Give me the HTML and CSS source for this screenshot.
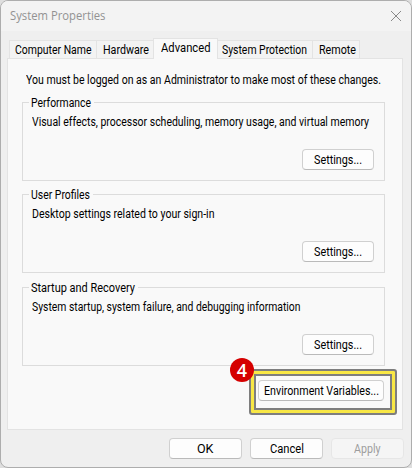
FILE: index.html
```html
<!DOCTYPE html>
<html lang="en">
<head>
<meta charset="utf-8">
<title>System Properties</title>
<link rel="stylesheet" href="styles.css">
</head>
<body>
<main class="window">
  <header class="titlebar">
    <h1 class="title"><span data-width="95.5">System Properties</span></h1>
    <svg class="close" width="12" height="12" viewBox="0 0 12 12"><path d="M1 1L11 11M11 1L1 11"/></svg>
  </header>
  <nav class="tabs">
    <div class="tab tab-computer"><span data-width="76.5">Computer Name</span></div>
    <div class="tab tab-hardware"><span data-width="46">Hardware</span></div>
    <div class="tab tab-advanced active"><span data-width="49.5">Advanced</span></div>
    <div class="tab tab-protection"><span data-width="85">System Protection</span></div>
    <div class="tab tab-remote"><span data-width="37">Remote</span></div>
  </nav>
  <section class="panel">
    <p class="notice"><span data-width="355">You must be logged on as an Administrator to make most of these changes.</span></p>
    <section class="group">
      <h2 class="legend"><span data-width="60">Performance</span></h2>
      <p class="desc"><span data-width="337">Visual effects, processor scheduling, memory usage, and virtual memory</span></p>
      <button class="button settings"><span data-width="48">Settings...</span></button>
    </section>
    <section class="group">
      <h2 class="legend"><span data-width="59">User Profiles</span></h2>
      <p class="desc"><span data-width="182.5">Desktop settings related to your sign-in</span></p>
      <button class="button settings"><span data-width="48">Settings...</span></button>
    </section>
    <section class="group">
      <h2 class="legend"><span data-width="104">Startup and Recovery</span></h2>
      <p class="desc"><span data-width="268.5">System startup, system failure, and debugging information</span></p>
      <button class="button settings"><span data-width="48">Settings...</span></button>
    </section>
    <div class="highlight">
      <button class="button environment"><span data-width="115">Environment Variables...</span></button>
      <span class="badge">4</span>
    </div>
  </section>
  <footer class="actions">
    <button class="button"><span data-width="16.5">OK</span></button>
    <button class="button"><span data-width="34">Cancel</span></button>
    <button class="button" disabled><span data-width="26.5">Apply</span></button>
  </footer>
</main>
<script src="labels.js"></script>
</body>
</html>
```
FILE: labels.js
```js
// Condense each label to its dialog width.
document.querySelectorAll('[data-width]').forEach((label) => {
  const width = Number(label.dataset.width);
  const natural = label.getBoundingClientRect().width;
  label.style.transform = `scaleX(${width / natural})`;
  label.style.marginRight = `${width - natural}px`;
});
```
FILE: styles.css
```css
* { box-sizing: border-box; }
body { margin: 0; background: #dedede; color: #000; font: 12px/14px Roboto, "Liberation Sans", sans-serif; }
h1, h2, p { margin: 0; font: inherit; }
[data-width] { display: inline-block; flex: none; white-space: nowrap; transform-origin: left center; vertical-align: top; }
.window { width: 412px; height: 468px; border: 1px solid #adadad; border-radius: 8px; background: #efefef; overflow: hidden; }
.titlebar { height: 30px; background: #f3f3f3; display: flex; justify-content: space-between; align-items: center; padding: 0 9px 0 9px; }
.title { font: 12px/16px "Open Sans", sans-serif; color: #929292; }
.close { fill: none; stroke: #898989; stroke-width: 1; }
.tabs { height: 27px; margin: 0 0 0 8px; display: flex; align-items: flex-end; }
.tab { height: 18px; border: 1px solid #e3e3e3; border-bottom: 0; margin-right: -1px; background: #f3f3f3; padding-top: 2px; padding-left: 5px; }
.tab-computer { width: 88px; }
.tab-hardware { width: 58px; padding-left: 6px; }
.tab-advanced { width: 65px; padding-left: 7px; }
.tab-protection { width: 96px; padding-left: 4px; }
.tab-remote { width: 48px; padding-left: 6px; }
.active { height: 21px; margin-bottom: -1px; background: #f9f9f9; position: relative; }
.panel { width: 396px; height: 372px; margin-left: 6px; border: 1px solid #e3e3e3; background: #f9f9f9; padding: 14px 17px 0 14px; }
.notice { padding-left: 4px; height: 29px; }
.group { height: 79px; border: 1px solid #dcdcdc; margin-bottom: 13px; padding: 0 10px 10px 9px; display: flex; flex-direction: column; }
.group:nth-of-type(2) { margin-bottom: 14px; }
.legend { height: 14px; margin-top: -7px; margin-left: -3px; padding: 0 3px 0 2px; align-self: flex-start; background: #f9f9f9; }
.desc { margin-top: 5px; }
.button { display: flex; align-items: center; justify-content: center; height: 21px; width: 73px; padding: 0; border: 1px solid #d0d0d0; border-bottom-color: #bababa; border-radius: 4px; background: #fdfdfd; color: #000; font: inherit; }
.button:disabled { color: #9d9d9d; background: #f5f5f5; border-color: #e6e6e6; }
.settings { width: 72px; margin: auto 0 0 auto; }
.highlight { position: relative; width: 148px; height: 46px; margin: -10px 0 0 227px; padding: 5px 3px; border: 2px solid #7e7e7e; border-radius: 3px; box-shadow: inset 0 0 0 3px #f8e745, inset 0 0 0 5px #7e7e7e; }
.environment { width: 126px; margin: 4px 0 0 4px; }
.badge { position: absolute; left: -21px; top: -13px; width: 24px; height: 24px; border-radius: 50%; background: #d50000; color: #fff; font: 600 18px/24px "Open Sans", sans-serif; text-align: center; }
.actions { display: flex; justify-content: flex-end; gap: 8px; padding: 8px 7px 0 0; }
```
